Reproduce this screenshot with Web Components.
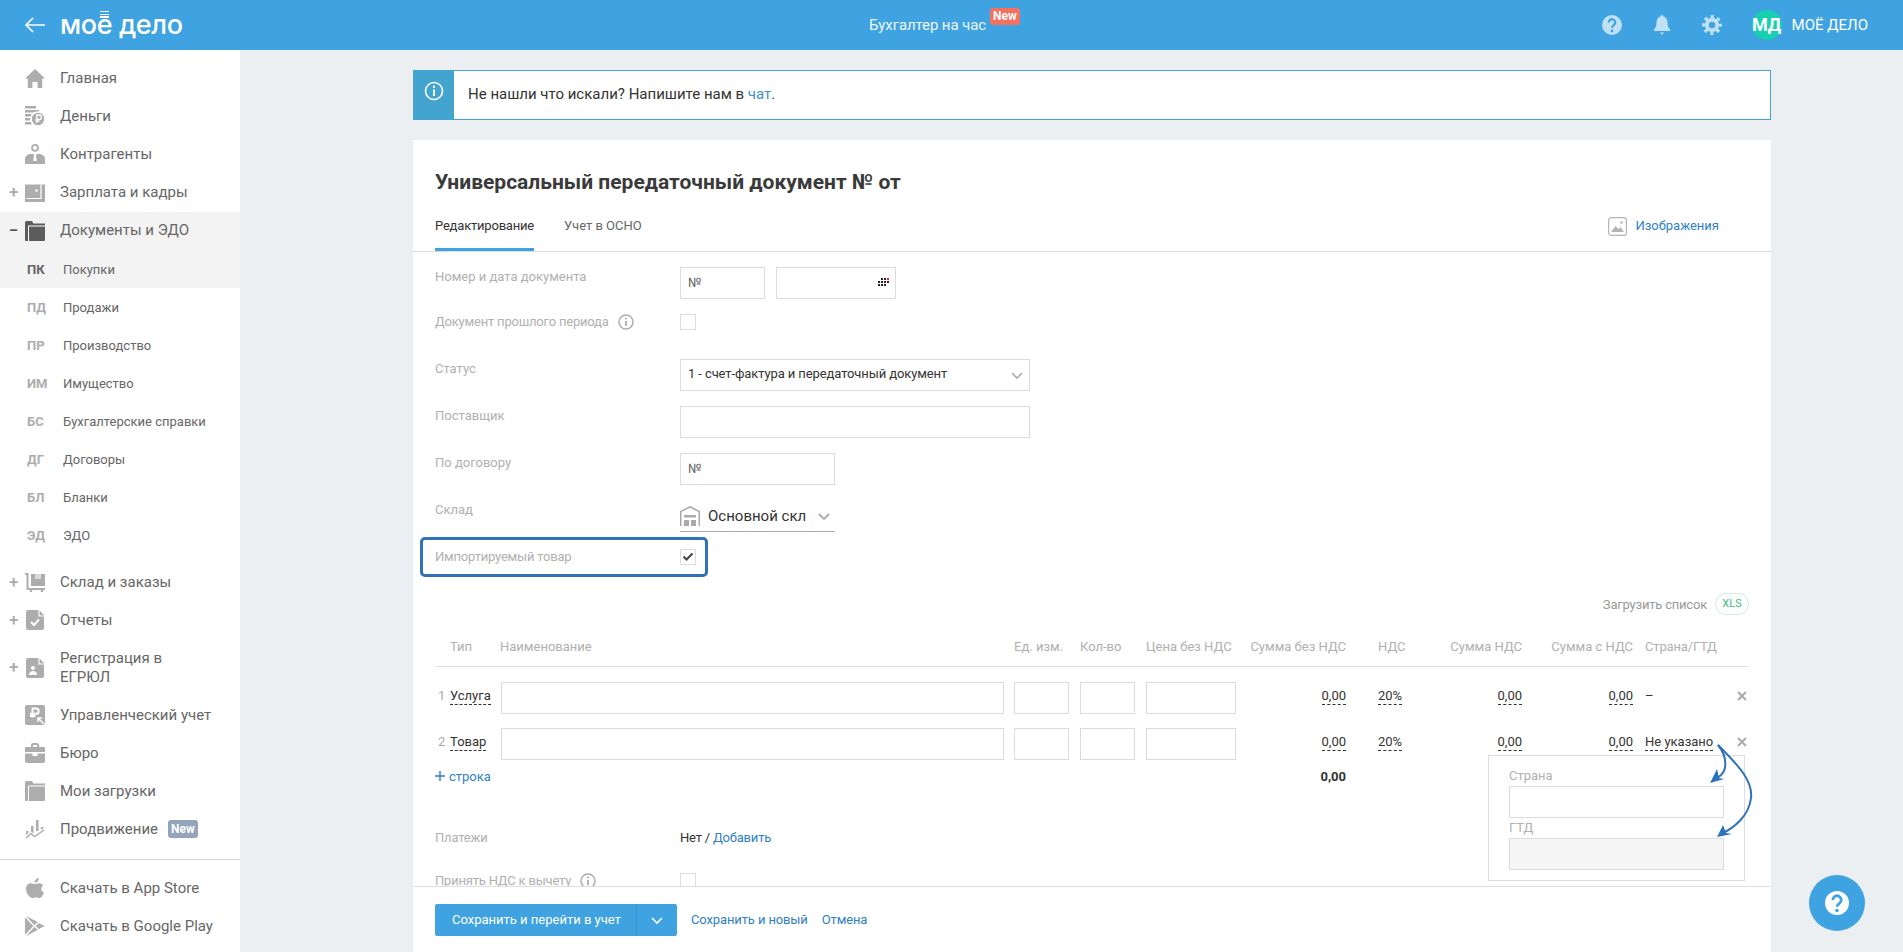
<!DOCTYPE html>
<html lang="ru">
<head>
<meta charset="utf-8">
<title>Моё дело</title>
<style>
    html, body { margin: 0; height: 100%; }
    body { display: flex; flex-direction: column; height: 952px; overflow: hidden; background: #ebeff2; font-family: Roboto, "Liberation Sans", sans-serif; }
    .layout { display: flex; flex: 1; min-height: 0; }
</style>
</head>
<body>
<app-header></app-header>
<div class="layout">
    <side-nav></side-nav>
    <main-area></main-area>
</div>
<help-fab></help-fab>

<script>
const ICONS = {
    home: '<path d="M10 1 20 10.500h-2.800V20H12.600v-6H7.400v6H2.800v-9.500H0z"/>',
    money: '<path d="M0 0h11v2.500H0zM0 4h14v2.500H0zM0 8h6.500v2.500H0zM0 12h5v2.500H0zM0 16h6.500v2.500H0z"/><circle cx="13" cy="13" r="7" stroke="#fff" stroke-width="1.500"/><path d="M11.800 17v-8h2.400a2 2 0 0 1 0 4.400h-3.600M10.600 15h4" fill="none" stroke="#fff" stroke-width="1.300"/>',
    people: '<circle cx="10" cy="3.800" r="3" fill="none" stroke="currentColor" stroke-width="1.800"/><path d="M0 20v-5c0-3 3-5 6-5h8c3 0 6 2 6 5v5z"/><path d="M8.500 10h3l-.5 2 .8 5h-3.600l.8-5z" fill="#fff"/>',
    wallet: '<path d="M0 2.500h20V20H0z"/><path d="M1.500 16.500H16V2.500" fill="none" stroke="#fff" stroke-width="1.200"/><circle cx="11.500" cy="8.500" r="1.200" fill="#fff"/>',
    folder: '<path d="M1.500 0H7l1.500 2.500H20V19a1 1 0 0 1-1 1H1a1 1 0 0 1-1-1V1.500A1.500 1.500 0 0 1 1.500 0z"/><path d="M3.500 20V5H20" fill="none" stroke="#fff" stroke-width="1"/>',
    store: '<path d="M0 1h3.500v15H20v2H1.500V3H0z"/><path d="M6 2h14v12H6z"/><path d="M10 2h6v5h-6z" fill="#fff" opacity=".55"/><circle cx="6" cy="19" r="1.300"/><circle cx="17" cy="19" r="1.300"/>',
    report: '<path d="M2 0h11l5 5v13a2 2 0 0 1-2 2H2a2 2 0 0 1-2-2V2a2 2 0 0 1 2-2z" transform="translate(1)"/><path d="M14 0v6h5" fill="none" stroke="#fff" stroke-width="1.200"/><path d="M6 12l3 3 5-5.500" fill="none" stroke="#fff" stroke-width="2"/>',
    register: '<path d="M2 0h11l5 5v13a2 2 0 0 1-2 2H2a2 2 0 0 1-2-2V2a2 2 0 0 1 2-2z" transform="translate(1)"/><path d="M14 0v6h5" fill="none" stroke="#fff" stroke-width="1.200"/><circle cx="8" cy="10" r="2" fill="#fff"/><path d="M4 17c0-3 2-4 4-4s4 1 4 4z" fill="#fff"/>',
    manage: '<rect width="20" height="20" rx="2"/><path d="M7.500 12.500V3.500h3.500a2.600 2.600 0 0 1 0 5.300H5M5 11h5.500" fill="none" stroke="#fff" stroke-width="2"/><path d="M19 19l-6-6M13 17v-4h4" fill="none" stroke="#fff" stroke-width="1.500"/>',
    case: '<path d="M6 4V2a2 2 0 0 1 2-2h4a2 2 0 0 1 2 2v2h5a1 1 0 0 1 1 1v4H0V5a1 1 0 0 1 1-1zM8 2v2h4V2z" fill-rule="evenodd"/><path d="M0 10.500h7.500V13h5v-2.500H20V18a2 2 0 0 1-2 2H2a2 2 0 0 1-2-2z"/>',
    load: '<path d="M1.500 0H7l1.500 2.500H20V19a1 1 0 0 1-1 1H1a1 1 0 0 1-1-1V1.500A1.500 1.500 0 0 1 1.500 0z"/><path d="M3.500 20V5H20" fill="none" stroke="#fff" stroke-width="1"/>',
    promo: '<path d="M1 12h2.500v6H1zM6 7h2.500v7H6zM11 1h2.500v11H11zM16 8h2.500v4H16z"/><path d="M0 19l5.500-5 4 3 10-6.500" fill="none" stroke="#fff" stroke-width="3"/><path d="M1 19l5-4.500 3.500 3L19 11" fill="none" stroke="currentColor" stroke-width="1.400"/>',
    apple: '<path d="M14 5.200c1.800 0 3.200.8 4.200 2.200-2.800 1.700-2.300 5.800.8 7-.9 2.400-2.700 5.600-4.800 5.600-1.200 0-1.900-.8-3.300-.8s-2.200.8-3.300.8C4.600 20 1 15.300 1 11c0-3.700 2.400-5.800 4.900-5.800 1.500 0 2.800.9 3.800.9s2.500-.9 4.300-.9zM13.800 0c.2 2.600-1.900 4.700-4.100 4.500C9.500 2.300 11.500.1 13.800 0z"/>',
    play: '<path d="M1 0l8.500 9.300L12.800 6zM0 1.200v17.600L8.400 10zM1 20l11.800-6-3.300-3.300zM14 7l5.500 3-5.500 3-3.400-3z"/>'
};

class AppHeader extends HTMLElement {
    connectedCallback() {
        this.attachShadow({mode: 'open'});
        this.shadowRoot.innerHTML = `
            <style>
                :host { display: flex; align-items: center; flex: none; height: 50px; background: #3ea3e0; color: #fff; font-family: Roboto, "Liberation Sans", sans-serif; padding-right: 35px; }
                .back { flex: none; margin-left: 25px; width: 20px; height: 16px; }
                .logo { position: relative; flex: none; width: 124px; margin-left: 15px; font: 500 27px/50px Inter, Roboto, sans-serif; letter-spacing: -.4px; white-space: nowrap; margin-top: -1px; }
                .logo i { position: absolute; left: 40px; top: 11px; width: 9px; height: 7px; background: repeating-linear-gradient(#fff 0 1.500px, transparent 1.500px 2.700px); }
                .center { display: flex; flex: none; margin-left: 685px; font-size: 15px; letter-spacing: -.1px; color: #eef7fd; align-self: stretch; align-items: center; }
                .center b { align-self: flex-start; margin: 8px 0 0 4px; background: #f4705f; color: #fff; font-size: 12px; font-weight: 700; letter-spacing: 0; line-height: 17px; width: 30px; text-align: center; border-radius: 3px; }
                .right { display: flex; align-items: center; margin-left: auto; }
                .right svg { display: block; width: 20px; height: 20px; color: #bfe0f5; }
                .right svg + svg { margin-left: 30px; }
                .avatar { width: 30px; height: 30px; margin-left: 30px; border-radius: 50%; background: #17d0b0; font-size: 18px; font-weight: 700; line-height: 30px; text-align: center; }
                .org { margin-left: 10px; font-size: 15px; white-space: nowrap; }
            </style>
            <svg class="back" viewBox="0 0 20 16" fill="none" stroke="#fff" stroke-width="1.600"><path d="M20 8H1M8 1 1 8l7 7"/></svg>
            <div class="logo">мое дело<i></i></div>
            <div class="center">Бухгалтер на час<b>New</b></div>
            <div class="right">
                <svg viewBox="0 0 20 20"><circle cx="10" cy="10" r="10" fill="currentColor"/><path d="M6.800 7.500a3.200 3.200 0 1 1 5 2.600c-1.200.8-1.800 1.300-1.800 2.700" fill="none" stroke="#3ea3e0" stroke-width="2.200"/><circle cx="10" cy="16" r="1.400" fill="#3ea3e0"/></svg>
                <svg viewBox="0 0 20 20"><path d="M10 0a1.500 1.500 0 0 1 1.500 1.500c2.800.7 4 3 4 6 0 3.500 1 5.500 2.500 7V16H2v-1.500C3.500 13 4.500 11 4.500 7.500c0-3 1.200-5.300 4-6A1.500 1.500 0 0 1 10 0zM8 17.500h4L10 20z" fill="currentColor"/></svg>
                <svg viewBox="0 0 20 20" fill="none" stroke="currentColor"><circle cx="10" cy="10" r="5.200" stroke-width="4"/><circle cx="10" cy="10" r="8.400" stroke-width="3.200" stroke-dasharray="3.300 3.300" stroke-dashoffset="1.650"/></svg>
                <div class="avatar">МД</div>
                <div class="org">МОЁ ДЕЛО</div>
            </div>
        `;
    }
}

class NavItem extends HTMLElement {
    connectedCallback() {
        const icon = this.getAttribute('icon');
        const toggle = this.getAttribute('toggle') || '';
        const badge = this.getAttribute('badge');
        this.attachShadow({mode: 'open'});
        this.shadowRoot.innerHTML = `
            <style>
                :host { display: flex; align-items: center; min-height: 38px; position: relative; color: #666; font-size: 15px; line-height: 19px; white-space: nowrap; }
                :host([toggle="−"]) { --ic: #5c5c5c; }
                .toggle { width: 25px; flex: none; padding-left: 9px; box-sizing: border-box; color: #aaa; font-size: 17px; line-height: 19px; font-weight: 500; }
                :host([toggle="−"]) .toggle { color: #555; }
                svg { display: block; width: 20px; height: 20px; flex: none; margin-right: 15px; color: var(--ic, #adadad); fill: currentColor; }
                b { margin-left: 10px; background: #94a4bb; color: #fff; font-size: 12px; font-weight: 700; line-height: 18px; width: 30px; text-align: center; border-radius: 3px; }
            </style>
            <span class="toggle">${toggle}</span>
            <svg viewBox="0 0 20 20">${ICONS[icon]}</svg>
            <span class="label"><slot></slot></span>
            ${badge ? `<b>${badge}</b>` : ''}
        `;
    }
}

class SubItem extends HTMLElement {
    connectedCallback() {
        this.attachShadow({mode: 'open'});
        this.shadowRoot.innerHTML = `
            <style>
                :host { display: flex; align-items: center; height: 38px; color: #666; font-size: 13px; padding-left: 27px; }
                b { width: 36px; flex: none; color: #adadad; font-size: 13px; font-weight: 700; }
                :host([active]) b { color: #666; }
            </style>
            <b>${this.getAttribute('code')}</b><slot></slot>
        `;
    }
}

class SideNav extends HTMLElement {
    connectedCallback() {
        this.attachShadow({mode: 'open'});
        this.shadowRoot.innerHTML = `
            <style>
                :host { display: block; flex: none; width: 240px; background: #fff; padding-top: 9px; box-sizing: border-box; }
                .open { background: linear-gradient(transparent 1px, #f3f3f4 1px); min-height: 39px; }
                .subs { margin-bottom: 9px; }
                .subs sub-item:first-child { background: #f3f3f4; }
                hr { border: 0; border-top: 1px solid #d8d8d8; margin: 11px 0 9px; }
                .reg { min-height: 57px; }
            </style>
            <nav-item icon="home">Главная</nav-item>
            <nav-item icon="money">Деньги</nav-item>
            <nav-item icon="people">Контрагенты</nav-item>
            <nav-item icon="wallet" toggle="+">Зарплата и кадры</nav-item>
            <nav-item icon="folder" toggle="−" class="open">Документы и ЭДО</nav-item>
            <div class="subs">
                <sub-item code="ПК" active>Покупки</sub-item>
                <sub-item code="ПД">Продажи</sub-item>
                <sub-item code="ПР">Производство</sub-item>
                <sub-item code="ИМ">Имущество</sub-item>
                <sub-item code="БС">Бухгалтерские справки</sub-item>
                <sub-item code="ДГ">Договоры</sub-item>
                <sub-item code="БЛ">Бланки</sub-item>
                <sub-item code="ЭД">ЭДО</sub-item>
            </div>
            <nav-item icon="store" toggle="+">Склад и заказы</nav-item>
            <nav-item icon="report" toggle="+">Отчеты</nav-item>
            <nav-item icon="register" toggle="+" class="reg">Регистрация в<br>ЕГРЮЛ</nav-item>
            <nav-item icon="manage">Управленческий учет</nav-item>
            <nav-item icon="case">Бюро</nav-item>
            <nav-item icon="load">Мои загрузки</nav-item>
            <nav-item icon="promo" badge="New">Продвижение</nav-item>
            <hr>
            <nav-item icon="apple">Скачать в App Store</nav-item>
            <nav-item icon="play">Скачать в Google Play</nav-item>
        `;
    }
}

class InfoBanner extends HTMLElement {
    connectedCallback() {
        this.attachShadow({mode: 'open'});
        this.shadowRoot.innerHTML = `
            <style>
                :host { display: flex; flex: none; height: 50px; box-sizing: border-box; border: 1px solid #42a4cf; background: #fff; color: #333; font-size: 15px; }
                .ic { width: 41px; flex: none; background: #42a4cf; display: flex; justify-content: center; padding-top: 11px; box-sizing: border-box; margin: -1px 0 -1px -1px; }
                svg { width: 20px; height: 20px; }
                .txt { padding-left: 14px; line-height: 46px; }
            </style>
            <div class="ic"><svg viewBox="0 0 20 20" fill="none" stroke="#fff"><circle cx="10" cy="10" r="8.500" stroke-width="1.600"/><path d="M10 8.500V15" stroke-width="2"/><circle cx="10" cy="5.700" r="1.200" fill="#fff" stroke="none"/></svg></div>
            <div class="txt"><slot></slot></div>
        `;
    }
}

class TextBox extends HTMLElement {
    connectedCallback() {
        this.attachShadow({mode: 'open'});
        this.shadowRoot.innerHTML = `
            <style>
                :host { display: block; box-sizing: border-box; height: 32px; border: 1px solid #dcdcdc; background: #fff; padding: 0 7px; font-size: 13px; line-height: 30px; color: #666; position: relative; }
                :host([disabled]) { background: #f5f5f5; }
            </style>
            <slot></slot>
        `;
    }
}

class CheckMark extends HTMLElement {
    connectedCallback() {
        this.attachShadow({mode: 'open'});
        this.shadowRoot.innerHTML = `
            <style>
                :host { display: block; flex: none; box-sizing: border-box; width: 16px; height: 16px; border: 1px solid #dcdcdc; background: #fff; }
                svg { display: block; width: 14px; height: 14px; }
            </style>
            ${this.hasAttribute('checked') ? '<svg viewBox="0 0 14 14" fill="none" stroke="#444" stroke-width="2"><path d="M2.500 6.500l3 3 6-6"/></svg>' : ''}
        `;
    }
}

class FormRow extends HTMLElement {
    connectedCallback() {
        const hint = this.hasAttribute('hint');
        this.attachShadow({mode: 'open'});
        this.shadowRoot.innerHTML = `
            <style>
                :host { display: flex; align-items: flex-start; font-size: 13px; }
                :host([center]) { align-items: center; height: 16px; }
                .lab { display: flex; align-items: center; gap: 9px; width: 245px; flex: none; color: #b0b0b0; line-height: 20px; white-space: nowrap; }
                .val { flex: 1; display: flex; gap: 11px; color: #333; min-width: 0; }
                svg { width: 16px; height: 16px; flex: none; }
            </style>
            <div class="lab"><slot name="label"></slot>${hint ? '<svg viewBox="0 0 16 16" fill="none" stroke="#aaa"><circle cx="8" cy="8" r="7" stroke-width="1.400"/><path d="M8 7v5" stroke-width="1.800"/><circle cx="8" cy="4.600" r="1" fill="#aaa" stroke="none"/></svg>' : ''}</div>
            <div class="val"><slot></slot></div>
        `;
    }
}

class GoodsTable extends HTMLElement {
    connectedCallback() {
        const row = (n, type, last) => `
            <div class="num">${n}</div>
            <div class="cell"><span class="d">${type}</span></div>
            <div><text-box class="name"></text-box></div>
            <div><text-box class="unit"></text-box></div>
            <div><text-box class="unit"></text-box></div>
            <div><text-box class="price"></text-box></div>
            <div class="cell r"><span class="d">0,00</span></div>
            <div class="cell p32"><span class="d">20%</span></div>
            <div class="cell r"><span class="d">0,00</span></div>
            <div class="cell r"><span class="d">0,00</span></div>
            <div class="cell p12">${last}</div>
            <div class="x"><svg viewBox="0 0 10 10" stroke="#aaa" stroke-width="2"><path d="M1 1l8 8M9 1l-8 8"/></svg></div>`;
        this.attachShadow({mode: 'open'});
        this.shadowRoot.innerHTML = `
            <style>
                :host { display: block; position: relative; font-size: 13px; color: #333; }
                .load { display: flex; justify-content: flex-end; align-items: center; gap: 8px; height: 22px; color: #999; margin-bottom: 22px; letter-spacing: -.2px; }
                .load span { width: 34px; height: 22px; box-sizing: border-box; border: 1px solid #cfeede; border-radius: 11px; color: #3fb97c; font-size: 11px; letter-spacing: 0; line-height: 20px; text-align: center; }
                .grid { display: grid; grid-template-columns: 15px 51px 513px 66px 66px 90px 110px 94px 82px 111px 102px 14px; row-gap: 14px; align-items: start; }
                .h { color: #b0b0b0; line-height: 20px; padding-bottom: 9px; border-bottom: 1px solid #dcdcdc; margin-bottom: 1px; white-space: nowrap; height: 20px; }
                .h.name-h { margin-left: -1px; }
                .num { color: #aaa; padding: 6px 0 0 3px; line-height: 16px; }
                .cell { padding-top: 6px; line-height: 16px; white-space: nowrap; }
                .d { display: inline-block; border-bottom: 1px dashed #333; }
                .r { text-align: right; }
                .p32 { padding-left: 32px; }
                .p12 { padding-left: 12px; }
                .name { width: 503px; }
                .unit { width: 55px; }
                .price { width: 90px; }
                .x { padding-top: 9px; }
                .x svg { display: block; width: 10px; height: 10px; margin-left: 2px; }
                .add { grid-column: 1 / span 3; color: #2f7fc4; line-height: 20px; margin-top: -7px; }
                .add svg { width: 10px; height: 10px; margin-right: 4px; }
                .total { grid-column: 7; text-align: right; font-weight: 700; line-height: 20px; margin-top: -7px; }
                country-popup { position: absolute; top: 162px; right: 4px; }
            </style>
            <div class="load">Загрузить список <span>XLS</span></div>
            <div class="grid">
                <div class="h"></div><div class="h">Тип</div><div class="h name-h">Наименование</div>
                <div class="h">Ед. изм.</div><div class="h">Кол-во</div><div class="h">Цена без НДС</div>
                <div class="h r">Сумма без НДС</div><div class="h p32">НДС</div><div class="h r">Сумма НДС</div>
                <div class="h r">Сумма с НДС</div><div class="h p12" style="letter-spacing:-.15px">Страна/ГТД</div><div class="h"></div>
                ${row(1, 'Услуга', '–')}
                ${row(2, 'Товар', '<span class="d">Не указано</span>')}
                <div class="add"><svg viewBox="0 0 10 10" stroke="#2f7fc4" stroke-width="1.400"><path d="M5 0v10M0 5h10"/></svg>строка</div>
                <div class="total">0,00</div>
            </div>
            <country-popup></country-popup>
        `;
    }
}

class CountryPopup extends HTMLElement {
    connectedCallback() {
        this.attachShadow({mode: 'open'});
        this.shadowRoot.innerHTML = `
            <style>
                :host { display: block; box-sizing: border-box; width: 257px; height: 126px; border: 1px solid #dcdcdc; background: #fff; padding: 10px 20px; font-size: 13px; color: #b0b0b0; line-height: 20px; }
                svg { position: absolute; left: 0; top: 0; width: 257px; height: 126px; overflow: visible; pointer-events: none; }
            </style>
            <div>Страна</div>
            <text-box></text-box>
            <div>ГТД</div>
            <text-box disabled></text-box>
            <svg viewBox="0 0 257 126">
                <g fill="none" stroke="#2f72b7" stroke-width="2">
                    <path d="M229-11C238 0 240 16 228 22"/>
                    <path d="M229-11C250 10 264 25 262 42 260 60 245 72 232 78"/>
                </g>
                <g fill="#2f72b7">
                    <path d="M221 27l7-14 2 9 5 1z"/>
                    <path d="M228 81l6-12 3 8 6 1z"/>
                </g>
            </svg>
        `;
    }
}

class DocCard extends HTMLElement {
    connectedCallback() {
        this.attachShadow({mode: 'open'});
        this.shadowRoot.innerHTML = `
            <style>
                :host { display: flex; flex-direction: column; flex: 1; min-height: 0; background: #fff; font-size: 13px; color: #333; }
                h1 { margin: 0; padding: 28px 22px 0; font-size: 21px; font-weight: 700; line-height: 28px; color: #3a3a3a; }
                .tabs { display: flex; flex: none; margin-top: 15px; padding: 0 52px 0 22px; border-bottom: 1px solid #dedede; height: 40px; }
                .tab { height: 40px; box-sizing: border-box; padding-top: 5px; line-height: 20px; }
                .tab + .tab { margin-left: 30px; color: #666; }
                .tab.on { border-bottom: 3px solid #3ea3e0; letter-spacing: -.2px; }
                .img { display: flex; gap: 8px; margin-left: auto; color: #2f7fc4; padding-top: 5px; line-height: 20px; }
                .img svg { width: 19px; height: 19px; margin-top: 1px; }
                .body { flex: 1; min-height: 0; overflow: hidden; padding: 15px 22px 0; }
                form-row { margin-bottom: 15px; }
                .tight { letter-spacing: -.2px; }
                .gap { margin-top: 29px; }
                .no { width: 85px; }
                .date { width: 120px; }
                .date svg { position: absolute; right: 6px; top: 10px; width: 11px; height: 9px; }
                .wide { width: 350px; }
                .mid { width: 155px; }
                .sel { color: #333; line-height: 27px; letter-spacing: -.1px; }
                .sel svg { position: absolute; right: 6px; top: 12px; width: 12px; height: 8px; }
                .stock { display: flex; align-items: flex-start; position: relative; box-sizing: border-box; width: 155px; height: 32px; border-bottom: 1px solid #aaa; font-size: 15px; color: #333; }
                .stock .wh { width: 20px; height: 20px; margin: 6px 8px 0 0; flex: none; }
                .stock span { width: 98px; overflow: hidden; white-space: nowrap; line-height: 32px; }
                .stock .ch { position: absolute; right: 5px; top: 13px; width: 12px; height: 8px; }
                .import { position: relative; margin: 0; }
                .import::before { content: ""; position: absolute; left: -15px; top: -12px; width: 288px; height: 40px; box-sizing: border-box; border: 3px solid #2f72b7; border-radius: 5px; pointer-events: none; }
                goods-table { margin: 28px 0 0; }
                .pay { margin-top: 41px; }
                a { color: #2f7fc4; text-decoration: none; }
                .foot { display: flex; align-items: center; flex: none; height: 66px; box-sizing: border-box; border-top: 1px solid #dedede; padding: 0 22px; gap: 14px; background: #fff; }
                .foot a { letter-spacing: -.12px; }
                .pay span { letter-spacing: -.2px; }
                .btn { display: flex; height: 32px; width: 242px; background: #3ea3e0; color: #fff; border-radius: 2px; line-height: 32px; }
                .btn span { padding-left: 17px; width: 202px; box-sizing: border-box; border-right: 1px solid #3897d2; white-space: nowrap; }
                .btn svg { width: 12px; height: 8px; margin: 13px 0 0 14px; }
            </style>
            <h1>Универсальный передаточный документ № от</h1>
            <div class="tabs">
                <div class="tab on">Редактирование</div>
                <div class="tab">Учет в ОСНО</div>
                <a class="img"><svg viewBox="0 0 19 19"><rect x=".6" y=".6" width="17.800" height="17.800" rx="2.500" fill="none" stroke="#b5b5b5" stroke-width="1.200"/><path d="M3 15l4.500-6 3 3 2-2 3.500 5z" fill="#b5b5b5"/><circle cx="13.500" cy="5.500" r="1.300" fill="#b5b5b5"/></svg>Изображения</a>
            </div>
            <div class="body">
                <form-row><span slot="label">Номер и дата документа</span>
                    <text-box class="no">№</text-box>
                    <text-box class="date"><svg viewBox="0 0 11 9" fill="#222"><path d="M3 0h2v2H3zM6 0h2v2H6z"/><path d="M9 0h2v2H9z" fill="#e3232e"/><path d="M0 3h2v2H0zM3 3h2v2H3zM6 3h2v2H6zM9 3h2v2H9zM0 6h2v2H0zM3 6h2v2H3zM6 6h2v2H6z"/></svg></text-box>
                </form-row>
                <form-row center hint><span slot="label" class="tight">Документ прошлого периода</span><check-mark></check-mark></form-row>
                <form-row class="gap"><span slot="label">Статус</span>
                    <text-box class="wide sel">1 - счет-фактура и передаточный документ<svg viewBox="0 0 12 8" fill="none" stroke="#aaa" stroke-width="1.600"><path d="M1 1l5 5 5-5"/></svg></text-box>
                </form-row>
                <form-row><span slot="label">Поставщик</span><text-box class="wide"></text-box></form-row>
                <form-row><span slot="label">По договору</span><text-box class="mid">№</text-box></form-row>
                <form-row style="margin-bottom:17px"><span slot="label">Склад</span>
                    <div class="stock">
                        <svg class="wh" viewBox="0 0 20 20" fill="#aaa"><path d="M10 0 20 5v15h-1.500V6L10 1.800 1.500 6v14H0V5z"/><path d="M4 9h12v2.500H4zM4 14h5v6H4zM11 14h5v6h-5z"/></svg>
                        <span>Основной склад</span>
                        <svg class="ch" viewBox="0 0 12 8" fill="none" stroke="#aaa" stroke-width="1.800"><path d="M1 1l5 5 5-5"/></svg>
                    </div>
                </form-row>
                <form-row center class="import"><span slot="label" class="tight">Импортируемый товар</span><check-mark checked></check-mark></form-row>
                <goods-table></goods-table>
                <form-row class="pay"><span slot="label">Платежи</span><span style="line-height:20px">Нет / <a>Добавить</a></span></form-row>
                <form-row center hint style="margin-top:25px"><span slot="label" class="tight">Принять НДС к вычету</span><check-mark></check-mark></form-row>
            </div>
            <div class="foot">
                <div class="btn"><span>Сохранить и перейти в учет</span><svg viewBox="0 0 12 8" fill="none" stroke="#fff" stroke-width="1.600"><path d="M1 1l5 5 5-5"/></svg></div>
                <a>Сохранить и новый</a>
                <a>Отмена</a>
            </div>
        `;
    }
}

class MainArea extends HTMLElement {
    connectedCallback() {
        this.attachShadow({mode: 'open'});
        this.shadowRoot.innerHTML = `
            <style>
                :host { display: flex; flex-direction: column; flex: 1; min-width: 0; gap: 20px; padding: 20px 132px 0 173px; }
                a { color: #3f8fd0; text-decoration: none; }
            </style>
            <info-banner>Не нашли что искали? Напишите нам в <a>чат</a>.</info-banner>
            <doc-card></doc-card>
        `;
    }
}

class HelpFab extends HTMLElement {
    connectedCallback() {
        this.attachShadow({mode: 'open'});
        this.shadowRoot.innerHTML = `
            <style>
                :host { position: fixed; left: 1809px; top: 875px; width: 56px; height: 56px; border-radius: 50%; background: #3ea3e0; display: flex; align-items: center; justify-content: center; }
                svg { width: 24px; height: 24px; }
            </style>
            <svg viewBox="0 0 24 24"><circle cx="12" cy="12" r="12" fill="#fff"/><path d="M7.800 9a4.200 4.200 0 1 1 6.600 3.400c-1.600 1.100-2.400 1.800-2.400 3.400" fill="none" stroke="#3ea3e0" stroke-width="2.800"/><circle cx="12" cy="19.500" r="1.800" fill="#3ea3e0"/></svg>
        `;
    }
}

customElements.define('nav-item', NavItem);
customElements.define('sub-item', SubItem);
customElements.define('side-nav', SideNav);
customElements.define('app-header', AppHeader);
customElements.define('info-banner', InfoBanner);
customElements.define('text-box', TextBox);
customElements.define('check-mark', CheckMark);
customElements.define('form-row', FormRow);
customElements.define('country-popup', CountryPopup);
customElements.define('goods-table', GoodsTable);
customElements.define('doc-card', DocCard);
customElements.define('main-area', MainArea);
customElements.define('help-fab', HelpFab);
</script>
</body>
</html>
